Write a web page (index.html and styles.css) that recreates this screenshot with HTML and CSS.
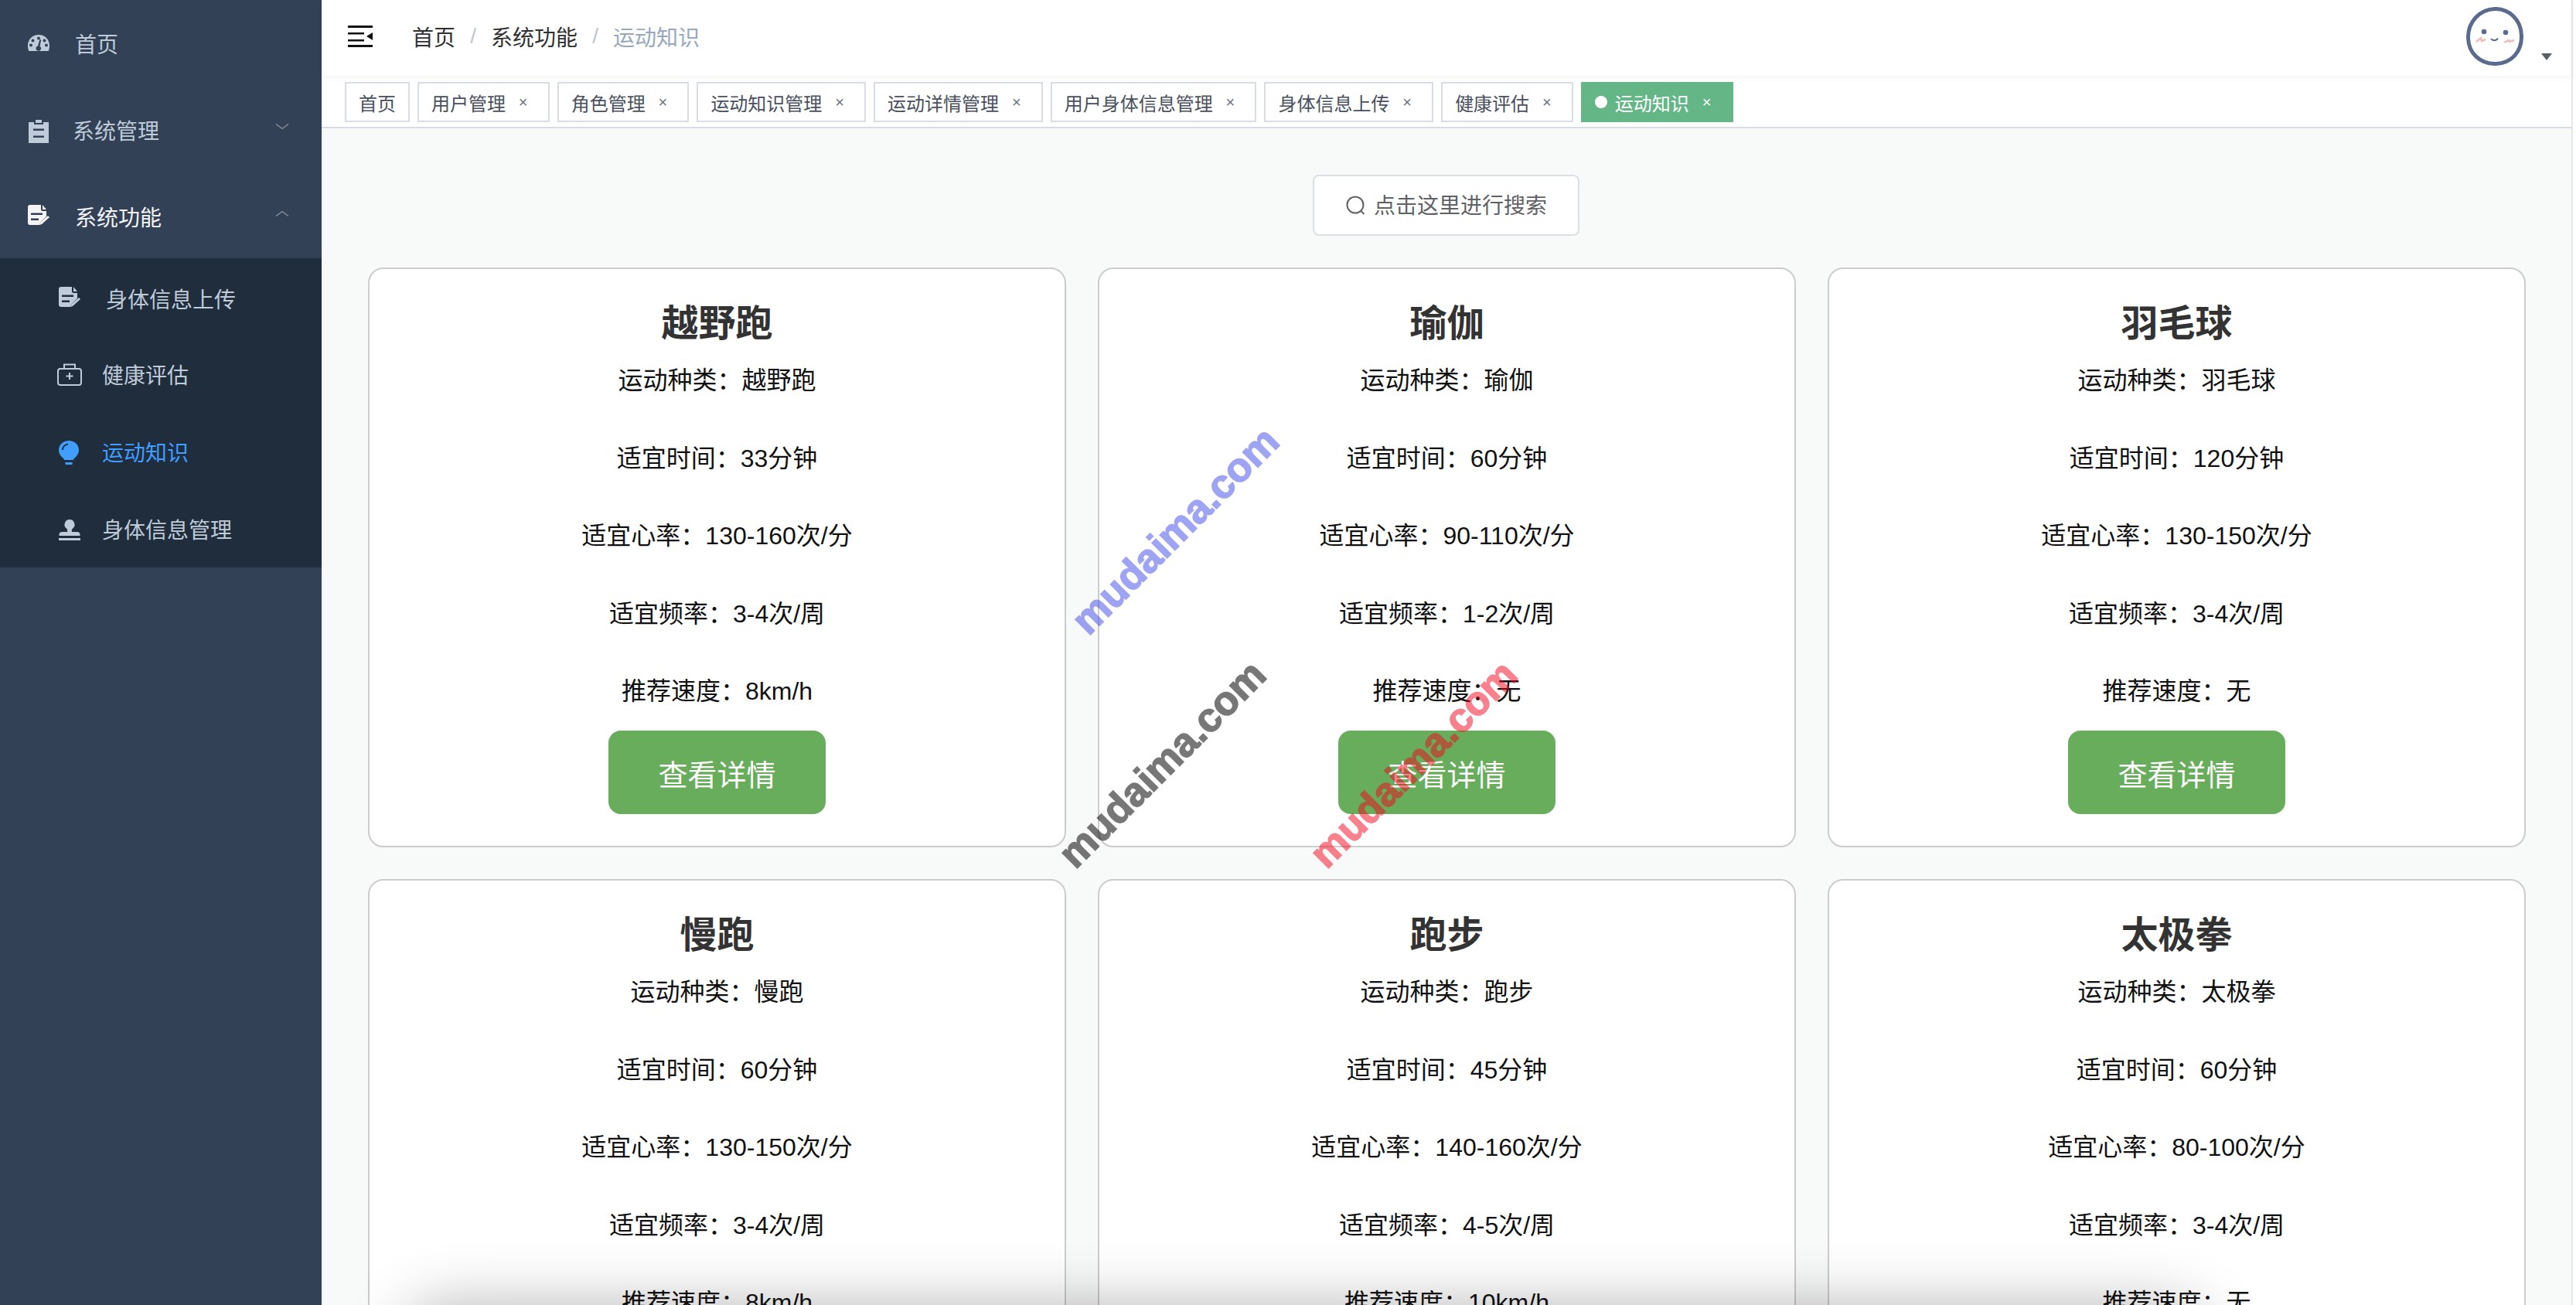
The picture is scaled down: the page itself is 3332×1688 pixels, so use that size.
FILE: index.html
```html
<!DOCTYPE html>
<html lang="zh-CN">
<head>
<meta charset="utf-8">
<title>运动知识</title>
<link rel="stylesheet" href="styles.css">
</head>
<body>
<div class="app">
  <aside class="sidebar">
    <ul class="menu">
      <li class="menu-item home">
        <svg class="icon" viewBox="0 0 28 21"><path fill="#bfcbd9" fill-rule="evenodd" d="M14 0C6 0 0 6 0 14c0 2.600.5 5 1.300 7h25.400c.8-2 1.300-4.400 1.300-7C28 6 22 0 14 0zM14 2.400a2 2 0 1 1 0 4 2 2 0 0 1 0-4zM6.500 5.500a2 2 0 1 1 0 4 2 2 0 0 1 0-4zM21.500 5.500a2 2 0 1 1 0 4 2 2 0 0 1 0-4zM4 11.500a2 2 0 1 1 0 4 2 2 0 0 1 0-4zM24 11.500a2 2 0 1 1 0 4 2 2 0 0 1 0-4zM17.200 6.500l-1.700 8.200a3.300 3.300 0 1 1-2.400-.4l2.300-8.200z"/></svg>
        <span class="label">首页</span>
      </li>
      <li class="menu-item tight">
        <svg class="icon" viewBox="0 0 28 30"><path fill="#bfcbd9" fill-rule="evenodd" d="M10 0h8v4h-8zM1 3h7v3h12V3h7v27H1zM7 11.500v2.500h14v-2.500zM7 20.500v2.500h14v-2.500z"/></svg>
        <span class="label">系统管理</span>
        <svg class="chevron" viewBox="0 0 18 10"><path d="M1 1.500l8 6 8-6" fill="none" stroke="#909399" stroke-width="1.300"/></svg>
      </li>
      <li class="menu-item open">
        <svg class="icon" viewBox="0 0 28 26"><use href="#doc-shape"/></svg>
        <span class="label">系统功能</span>
        <svg class="chevron" viewBox="0 0 18 10"><path d="M1 8.500l8-6 8 6" fill="none" stroke="#909399" stroke-width="1.300"/></svg>
      </li>
    </ul>
    <ul class="submenu">
      <li class="sub-item wide">
        <svg class="sub-icon" viewBox="0 0 28 26"><use href="#doc-shape"/></svg>
        <span class="label">身体信息上传</span>
      </li>
      <li class="sub-item">
        <svg class="sub-icon kit" viewBox="0 0 32 29"><path fill="none" stroke="#bfcbd9" stroke-width="2" d="M4 7h24a3 3 0 0 1 3 3v15a3 3 0 0 1-3 3H4a3 3 0 0 1-3-3V10a3 3 0 0 1 3-3zM9 7V1.500h14V7M16 12v9M11.500 16.500h9"/></svg>
        <span class="label">健康评估</span>
      </li>
      <li class="sub-item active">
        <svg class="sub-icon" viewBox="0 0 26 31"><path fill="#409eff" d="M13 0C5.800 0 0 5.400 0 12.300c0 4.200 2 7 4.500 9.200 1.500 1.300 2.300 2.500 2.800 3.500h11.400c.5-1 1.300-2.200 2.800-3.500C23.900 19.300 26 16.500 26 12.300 26 5.400 20.200 0 13 0z"/><path fill="none" stroke="#1f2d3d" stroke-width="2" d="M5 12c0-4 3-7 7-7.500"/><path fill="#409eff" d="M8.500 28h9v3h-9z"/></svg>
        <span class="label">运动知识</span>
      </li>
      <li class="sub-item stamp">
        <svg class="sub-icon" viewBox="0 0 28 27"><path fill="#bfcbd9" d="M14 0a6.500 6.500 0 0 1 4 11.600c-.8.700-1.200 1.500-1.200 2.400v2h7.200c2 0 3.500 1.500 3.500 3.500V21H.5v-1.500C.5 17.500 2 16 4 16h7.200v-2c0-.9-.4-1.700-1.200-2.400A6.500 6.500 0 0 1 14 0zM0 24h28v3H0z"/></svg>
        <span class="label">身体信息管理</span>
      </li>
    </ul>
  </aside>

  <div class="main">
    <header class="navbar">
      <svg class="hamburger" viewBox="0 0 32 28"><path fill="#111" d="M0 0h32v3H0zM0 9h21v2.500H0zM0 18h21v2.500H0zM0 25h32v3H0zM32 9v10l-8-5z"/></svg>
      <nav class="crumbs">
        <span>首页</span><i class="sep">/</i><span>系统功能</span><i class="sep">/</i><span class="crumb-last">运动知识</span>
      </nav>
      <div class="avatar-wrap">
        <svg class="avatar" viewBox="0 0 74 76">
          <path d="M37 2.500C55 2 71 16 71.500 37c.5 21-13 36-33 36.500C18 74 3 60 2.500 40 2 19 18 3 37 2.500z" fill="#fff" stroke="#5b6b8e" stroke-width="5"/>
          <circle cx="23" cy="32" r="3.300" fill="#5b6b8e"/>
          <circle cx="51" cy="33" r="3.300" fill="#5b6b8e"/>
          <path d="M32 41c2 3 7 3 9-.5" fill="none" stroke="#5b6b8e" stroke-width="2"/>
          <path d="M13 45l6-5 1 4 5-2M49 46l6-3 1 2 6-2" fill="none" stroke="#efbdb9" stroke-width="2.500"/>
        </svg>
        <span class="caret"></span>
      </div>
    </header>

    <div class="tags">
      <span class="tag">首页</span>
      <span class="tag">用户管理<b class="close">×</b></span>
      <span class="tag">角色管理<b class="close">×</b></span>
      <span class="tag">运动知识管理<b class="close">×</b></span>
      <span class="tag">运动详情管理<b class="close">×</b></span>
      <span class="tag">用户身体信息管理<b class="close">×</b></span>
      <span class="tag">身体信息上传<b class="close">×</b></span>
      <span class="tag">健康评估<b class="close">×</b></span>
      <span class="tag tag-active"><i class="dot"></i>运动知识<b class="close">×</b></span>
    </div>

    <main class="content">
      <div class="search-row">
        <button class="search-btn" type="button">
          <svg class="search-icon" viewBox="0 0 26 26"><circle cx="12" cy="12" r="10.500" fill="none" stroke="#606266" stroke-width="2"/><path d="M19.500 20l4 4" stroke="#606266" stroke-width="2"/></svg>
          点击这里进行搜索
        </button>
      </div>

      <div class="cards">
        <article class="card">
          <h2>越野跑</h2>
          <p>运动种类：越野跑</p><p>适宜时间：33分钟</p><p>适宜心率：130-160次/分</p><p>适宜频率：3-4次/周</p><p>推荐速度：8km/h</p>
          <button class="detail" type="button">查看详情</button>
        </article>
        <article class="card">
          <h2>瑜伽</h2>
          <p>运动种类：瑜伽</p><p>适宜时间：60分钟</p><p>适宜心率：90-110次/分</p><p>适宜频率：1-2次/周</p><p>推荐速度：无</p>
          <button class="detail" type="button">查看详情</button>
        </article>
        <article class="card">
          <h2>羽毛球</h2>
          <p>运动种类：羽毛球</p><p>适宜时间：120分钟</p><p>适宜心率：130-150次/分</p><p>适宜频率：3-4次/周</p><p>推荐速度：无</p>
          <button class="detail" type="button">查看详情</button>
        </article>
        <article class="card">
          <h2>慢跑</h2>
          <p>运动种类：慢跑</p><p>适宜时间：60分钟</p><p>适宜心率：130-150次/分</p><p>适宜频率：3-4次/周</p><p>推荐速度：8km/h</p>
          <button class="detail" type="button">查看详情</button>
        </article>
        <article class="card">
          <h2>跑步</h2>
          <p>运动种类：跑步</p><p>适宜时间：45分钟</p><p>适宜心率：140-160次/分</p><p>适宜频率：4-5次/周</p><p>推荐速度：10km/h</p>
          <button class="detail" type="button">查看详情</button>
        </article>
        <article class="card">
          <h2>太极拳</h2>
          <p>运动种类：太极拳</p><p>适宜时间：60分钟</p><p>适宜心率：80-100次/分</p><p>适宜频率：3-4次/周</p><p>推荐速度：无</p>
          <button class="detail" type="button">查看详情</button>
        </article>
      </div>
    </main>
  </div>
  <div class="window-edge"></div>

  <span class="watermark wm-blue">mudaima.com</span>
  <span class="watermark wm-grey">mudaima.com</span>
  <span class="watermark wm-red">mudaima.com</span>
  <div class="edge-shadow"></div>
</div>

<svg class="defs" width="0" height="0" aria-hidden="true">
  <defs>
    <g id="doc-shape">
      <path fill="currentColor" fill-rule="evenodd" d="M3 0h14v6a2 2 0 0 0 2 2h5v7l-8 8-1 3H3a3 3 0 0 1-3-3V3a3 3 0 0 1 3-3zM4 10.500V13h15v-2.500zM4 17.500V20h10v-2.500z"/>
      <path fill="currentColor" d="M19 0l5 6h-5zM26 14l2 2-10 9-3 1 1-3z"/>
    </g>
  </defs>
</svg>
</body>
</html>
```
FILE: styles.css
```css
* { box-sizing: border-box; }
html, body { margin: 0; height: 100%; overflow: hidden; }
body { font-family: "Liberation Sans", "Noto Sans CJK SC", sans-serif; color: #000; }
ul { list-style: none; margin: 0; padding: 0; }
i, b { font-style: normal; font-weight: 400; }

.app { position: relative; display: flex; width: 3332px; height: 1688px; overflow: hidden; }
.defs { position: absolute; }

/* Sidebar */
.sidebar { flex: 0 0 416px; background: #324155; font-size: 28px; color: #bfcbd9; }
.menu { margin-top: -2px; }
.menu-item { display: flex; align-items: center; height: 112px; padding: 4px 0 0 36px; position: relative; }
.menu-item .icon { width: 28px; height: auto; color: #f4f4f5; margin-top: -4px; flex: none; }
.menu-item.home .icon { margin-top: -1px; }
.menu-item.tight .icon { margin-top: 4px; }
.menu-item .label { margin-left: 33px; }
.menu-item.tight .label { margin-left: 30px; }
.menu-item.open { color: #f4f4f5; }
.chevron { position: absolute; right: 42px; top: 50%; width: 18px; height: 10px; margin-top: -7px; }
.submenu { background: #1f2d3d; height: 400px; }
.sub-item { display: flex; align-items: center; height: 100px; padding-left: 76px; }
.sub-item .label { margin-left: 28px; }
.sub-icon { width: 28px; height: auto; color: #bfcbd9; flex: none; }
.sub-icon.kit { width: 32px; margin: 1px -2px 0; }
.sub-item.wide .label { margin: 4px 0 0 33px; }
.sub-item.wide .sub-icon { margin-top: -1px; }
.sub-item.active { color: #409eff; }
.sub-item.active .sub-icon { width: 26px; margin: 3px 2px 0 0; }
.sub-item.stamp .sub-icon { margin-top: 3px; }

/* Top bar */
.main { flex: 1; min-width: 0; display: flex; flex-direction: column; background: #f8f9f9; }
.window-edge { flex: 0 0 6px; background: #fff; border-left: 2px solid #e6e6e9; }
.navbar { flex: none; height: 98px; display: flex; align-items: center; background: #fff; padding-left: 34px; box-shadow: 0 2px 8px rgba(0, 21, 41, .05); position: relative; z-index: 2; }
.hamburger { width: 32px; height: 28px; margin-top: -4px; flex: none; }
.crumbs { margin: -4px 0 0 51px; font-size: 28px; color: #303133; display: flex; align-items: center; }
.sep { color: #c0c4cc; margin: 0 18px; width: 10px; text-align: center; }
.crumb-last { color: #97a8be; }
.avatar-wrap { margin-left: auto; display: flex; align-items: flex-end; padding-right: 25px; height: 76px; margin-top: -4px; }
.avatar { width: 74px; height: 76px; }
.caret { width: 0; height: 0; border: 7.500px solid transparent; border-top: 9px solid #5a5e66; border-bottom: 0; margin-left: 23px; margin-bottom: 7px; }

/* Tabs */
.tags { flex: none; height: 68px; display: flex; gap: 10px; padding: 8px 0 0 30px; background: #fff; border-bottom: 2px solid #d8dce5; }
.tag { height: 52px; display: flex; align-items: center; padding: 0 16px; border: 2px solid #d8dce5; background: #fff; color: #495060; font-size: 24px; }
.close { width: 32px; margin-left: 6.700px; text-align: center; font-size: 20px; color: #6b7180; }
.tag-active { background: #64b687; border-color: #64b687; color: #fff; }
.tag-active .close { color: #fff; }
.dot { width: 16px; height: 16px; border-radius: 50%; background: #fff; margin-right: 10px; }

/* Content */
.content { flex: 1; min-height: 0; padding: 60px 61px 0 60px; }
.search-row { display: flex; justify-content: center; margin-left: -1px; }
.search-btn { width: 345px; height: 79px; display: flex; align-items: center; justify-content: center; gap: 10px; background: #fff; border: 2px solid #dcdfe6; border-radius: 8px; color: #606266; font: inherit; font-size: 28px; padding: 0 0 3px 2px; }
.search-icon { width: 26px; height: 26px; flex: none; margin-top: 3px; }
.cards { display: grid; grid-template-columns: repeat(3, 903px); column-gap: 41px; row-gap: 41px; margin-top: 41px; }
.card { height: 750px; background: #fff; border: 2px solid #ccc; border-radius: 20px; padding-top: 35px; display: flex; flex-direction: column; align-items: center; }
.card h2 { margin: 0 0 13px; font-size: 48px; line-height: 72px; font-weight: 700; color: #333; }
.card p { margin: 0 0 52.600px; font-size: 32px; line-height: 48px; color: #111; }
.card p:nth-of-type(5) { margin-bottom: 27px; }
.detail { width: 281px; height: 108px; border: 0; border-radius: 16px; background: #67ad5b; color: #fff; font: inherit; font-size: 38px; padding: 0; }

/* Overlays */
.watermark { position: absolute; left: 0; top: 0; width: 400px; margin: -30px 0 0 -200px; line-height: 60px; text-align: center; font-size: 52.500px; font-weight: 700; -webkit-text-stroke: 1.500px currentColor; white-space: nowrap; transform: rotate(-45deg); pointer-events: none; z-index: 5; }
.wm-blue { left: 1520px; top: 686px; color: rgb(65, 73, 233); opacity: .5; }
.wm-grey { left: 1503px; top: 988px; color: #000; opacity: .53; }
.wm-red { left: 1828px; top: 988px; color: rgb(245, 5, 30); opacity: .5; }
.edge-shadow { position: absolute; left: 525px; width: 2325px; top: 1690px; height: 100px; border-radius: 60px; box-shadow: 0 0 80px 0 rgba(0, 0, 0, .3); pointer-events: none; z-index: 4; }
```
